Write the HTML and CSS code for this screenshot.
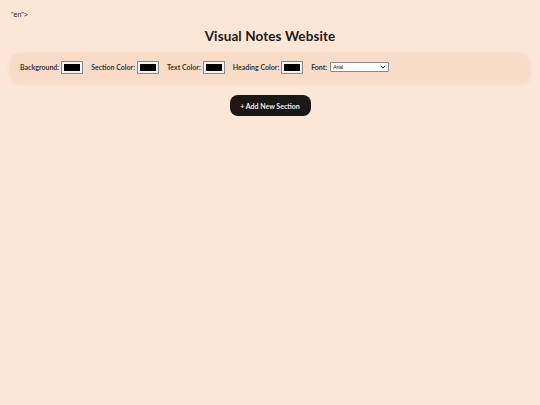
FILE: index.html
```html
<!DOCTYPE html>
<html lang="en">
<head>
<meta charset="utf-8">
<title>Visual Notes Website</title>
<link rel="stylesheet" href="styles.css">
</head>
<body>
<div class="stray">"en"&gt;</div>
<h1 class="title">Visual Notes Website</h1>
<div class="toolbar">
  <label class="ctl">Background: <span class="swatch"></span></label>
  <label class="ctl">Section Color: <span class="swatch"></span></label>
  <label class="ctl">Text Color: <span class="swatch"></span></label>
  <label class="ctl">Heading Color: <span class="swatch"></span></label>
  <label class="ctl">Font: <span class="select">Arial<svg class="caret" width="6" height="4" viewBox="0 0 6 4"><path d="M0.8 0.8 L3 3 L5.2 0.8" fill="none" stroke="#222" stroke-width="1"/></svg></span></label>
</div>
<div class="actions">
  <button class="add">+ Add New Section</button>
</div>
</body>
</html>
```
FILE: styles.css
```css
html, body {
  margin: 0;
  padding: 0;
}
body {
  background: #fde6d6;
  font-family: "Lato", "DejaVu Sans", sans-serif;
  color: #1c1a18;
  width: 540px;
  height: 405px;
  box-sizing: border-box;
  padding: 9px 10px 0;
}
.stray {
  font-family: "Liberation Sans", sans-serif;
  font-size: 7px;
  line-height: 9px;
  height: 9px;
  padding-left: 1px;
  padding-top: 1px;
}
.title {
  margin: 8px 0 0;
  text-align: center;
  font-size: 13.5px;
  line-height: 18px;
  font-weight: 700;
  letter-spacing: 0.1px;
}
.toolbar {
  margin-top: 8px;
  height: 30px;
  background: #f8dcc8;
  border-radius: 10px;
  box-shadow: 0 1px 4px rgba(160, 110, 80, 0.12);
  display: flex;
  align-items: center;
  padding: 0 10px;
  gap: 9px;
}
.ctl {
  display: flex;
  align-items: center;
  gap: 3px;
  font-size: 7px;
  font-weight: 700;
  color: #3a3530;
  position: relative;
  top: -1px;
}
.swatch {
  display: inline-block;
  width: 16px;
  height: 7px;
  background: #000;
  border: 2px solid #f3f3f3;
  outline: 1px solid #8a8a8a;
  box-sizing: content-box;
}
.select {
  display: inline-flex;
  align-items: center;
  justify-content: space-between;
  width: 53px;
  height: 8px;
  background: #fff;
  border: 1px solid #8a8a8a;
  border-radius: 1px;
  font-family: "Liberation Sans", sans-serif;
  font-size: 5px;
  font-weight: 400;
  color: #111;
  padding: 0 2px;
}
.caret {
  display: block;
}
.actions {
  display: flex;
  justify-content: center;
  margin-top: 12px;
}
.add {
  background: #1b1715;
  color: #f6ece2;
  border: none;
  border-radius: 8px;
  height: 21px;
  width: 81px;
  font-family: "Lato", "DejaVu Sans", sans-serif;
  font-size: 7px;
  font-weight: 700;
  padding: 0;
}
```
